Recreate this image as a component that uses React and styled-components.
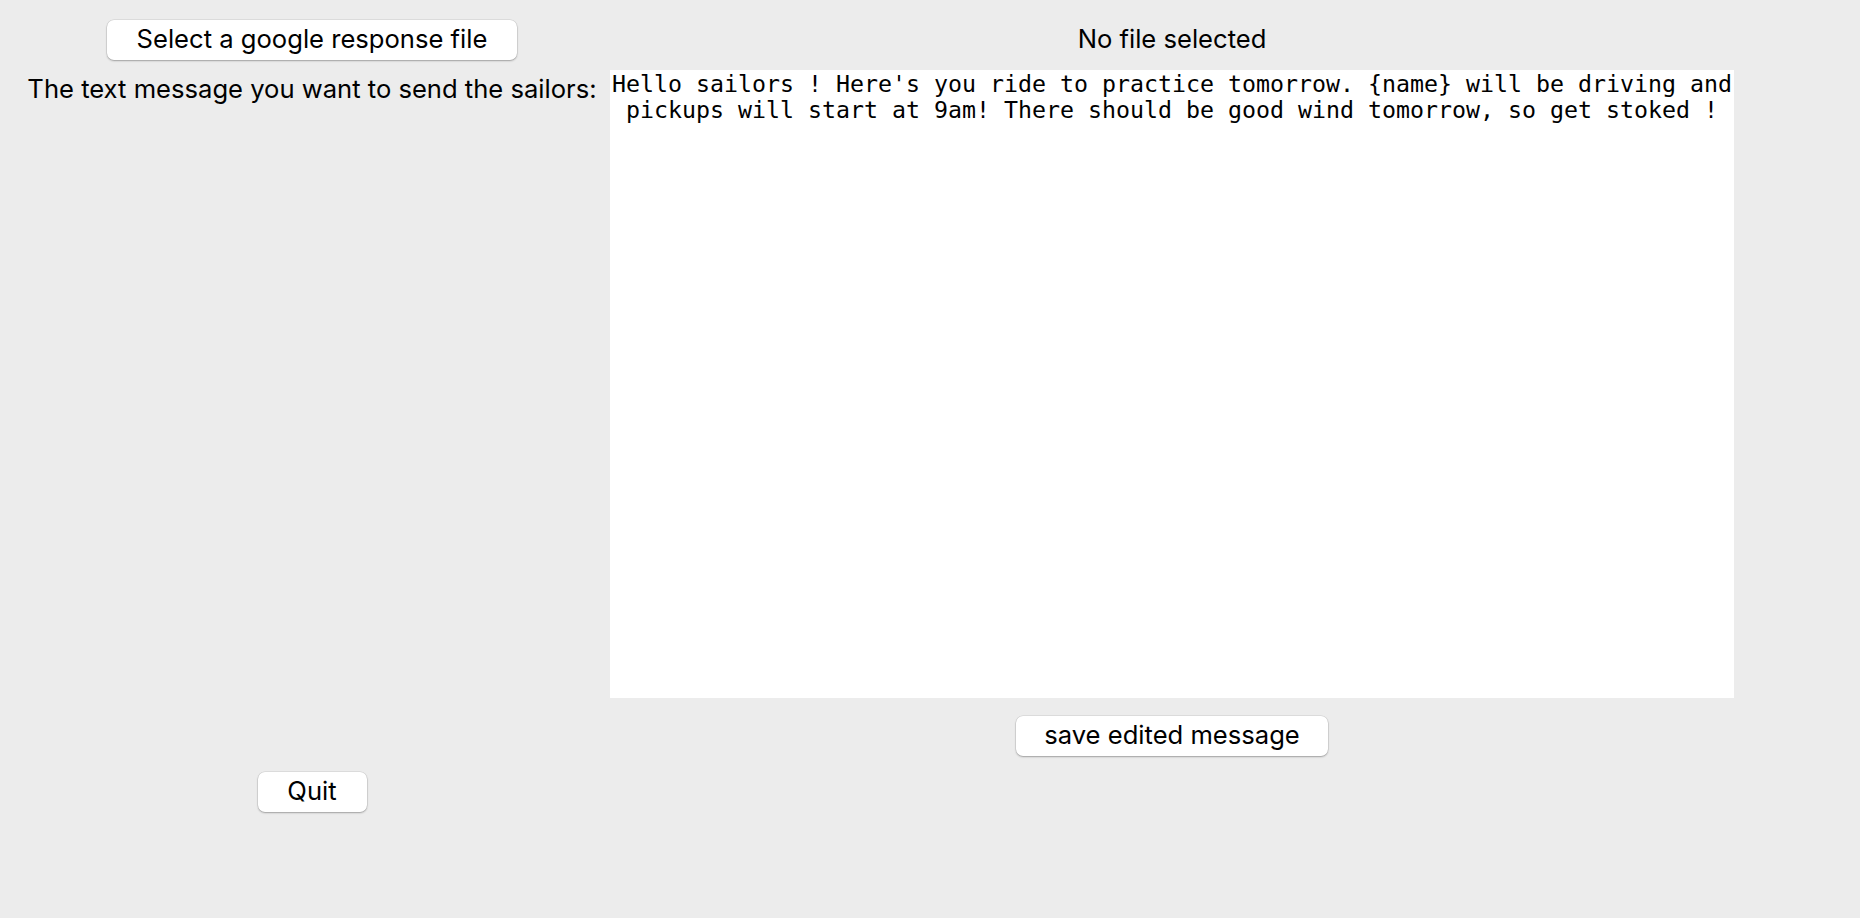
import styled, { createGlobalStyle } from "styled-components";

const GlobalStyle = createGlobalStyle`
  html, body {
    margin: 0;
    padding: 0;
    background: #ececec;
  }
  body {
    font-family: Inter, "Liberation Sans", sans-serif;
    color: #000;
  }
`;

export const Window = styled.div`
  display: grid;
  grid-template-columns: 584px 1124px;
  column-gap: 6px;
  padding: 20px 0 0 20px;
  height: 918px;
  box-sizing: border-box;
  align-content: start;
`;

export const Cell = styled.div`
  display: flex;
  justify-content: center;
  align-items: ${(props) => props.$align || "center"};
  grid-column: ${(props) => props.$col};
  margin-top: ${(props) => props.$top || 0}px;
`;

export const Button = styled.button`
  font-family: Inter, "Liberation Sans", sans-serif;
  font-size: 25.6px;
  line-height: 38px;
  height: 40px;
  width: ${(props) => props.$width}px;
  padding: 0 0 2px;
  background: #fff;
  color: #000;
  border: none;
  border-radius: 7px;
  box-shadow: 0 0 0 0.5px rgba(0, 0, 0, 0.12), 0 1px 2px rgba(0, 0, 0, 0.28);
  cursor: pointer;
`;

export const Status = styled.span`
  font-size: 25.6px;
  line-height: 38px;
  padding-bottom: 2px;
`;

export const Label = styled.label`
  font-size: 25.6px;
  line-height: 30px;
  margin-top: 4px;
  white-space: nowrap;
`;

export const MessageBox = styled.textarea`
  width: 1124px;
  height: 628px;
  box-sizing: border-box;
  padding: 1px 2px 2px;
  margin: 0;
  border: none;
  outline: none;
  resize: none;
  background: #fff;
  font-family: "DejaVu Sans Mono", "Liberation Mono", monospace;
  font-size: 23.25px;
  line-height: 26px;
  text-align: center;
  color: #000;
`;

const message =
  "Hello sailors ! Here's you ride to practice tomorrow. {name} will be driving and pickups will start at 9am! There should be good wind tomorrow, so get stoked !";

export default function App() {
  return (
    <>
      <GlobalStyle />
      <Window>
        <Cell $col={1}>
          <Button $width={410}>Select a google response file</Button>
        </Cell>
        <Cell $col={2}>
          <Status>No file selected</Status>
        </Cell>
        <Cell $col={1} $top={10} $align="flex-start">
          <Label>The text message you want to send the sailors:</Label>
        </Cell>
        <Cell $col={2} $top={10}>
          <MessageBox defaultValue={message} spellCheck={false} />
        </Cell>
        <Cell $col={2} $top={18}>
          <Button $width={312}>save edited message</Button>
        </Cell>
        <Cell $col={1} $top={16}>
          <Button $width={109}>Quit</Button>
        </Cell>
      </Window>
    </>
  );
}
